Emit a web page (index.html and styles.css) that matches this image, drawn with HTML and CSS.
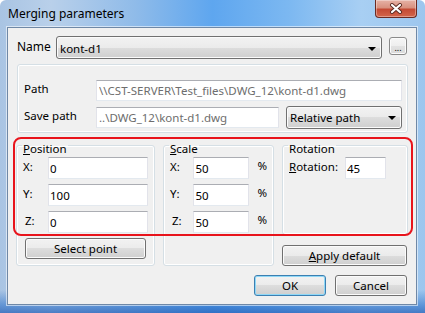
FILE: index.html
```html
<!DOCTYPE html>
<html lang="en">
<head>
<meta charset="utf-8">
<title>Merging parameters</title>
<link rel="stylesheet" href="styles.css">
</head>
<body>

<div class="window">
  <div class="titlebar">
    <span class="title">Merging parameters</span>
    <button class="close-btn" aria-label="Close">
      <svg width="14" height="11" viewBox="0 0 14 11">
        <path d="M3 2 L11 9 M11 2 L3 9" stroke="#5a2a22" stroke-width="4" stroke-linecap="round"/>
        <path d="M3 2 L11 9 M11 2 L3 9" stroke="#ffffff" stroke-width="2.2" stroke-linecap="round"/>
      </svg>
    </button>
  </div>

  <div class="client">
    <div class="name-row">
      <span class="name-label">Name</span>
      <div class="combo name-combo">
        <span>kont-d1</span>
        <span class="arrow"></span>
      </div>
      <button class="btn dots-btn">...</button>
    </div>

    <div class="path-group">
      <div class="path-row">
        <span class="path-label">Path</span>
        <input class="field disabled path-field" value="\\CST-SERVER\Test_files\DWG_12\kont-d1.dwg" readonly>
      </div>
      <div class="path-row">
        <span class="path-label">Save path</span>
        <input class="field disabled save-field" value="..\DWG_12\kont-d1.dwg" readonly>
        <div class="combo rel-combo">
          <span>Relative path</span>
          <span class="arrow"></span>
        </div>
      </div>
    </div>

    <div class="params">
      <fieldset class="box pos-box">
        <legend><u>P</u>osition</legend>
        <div class="coord-row"><span class="coord-label">X:</span><input class="field pos-field" value="0"></div>
        <div class="coord-row"><span class="coord-label">Y:</span><input class="field pos-field" value="100"></div>
        <div class="coord-row"><span class="coord-label z">Z:</span><input class="field pos-field" value="0"></div>
        <button class="btn select-btn">Select point</button>
      </fieldset>

      <fieldset class="box scale-box">
        <legend><u>S</u>cale</legend>
        <div class="coord-row"><span class="coord-label">X:</span><input class="field scale-field" value="50"><span class="pct">%</span></div>
        <div class="coord-row"><span class="coord-label">Y:</span><input class="field scale-field" value="50"><span class="pct">%</span></div>
        <div class="coord-row"><span class="coord-label z">Z:</span><input class="field scale-field" value="50"><span class="pct">%</span></div>
      </fieldset>

      <div class="rot-col">
        <fieldset class="box rot-box">
          <legend>Rotation</legend>
          <div class="coord-row"><span class="rot-label"><u>R</u>otation:</span><input class="field rot-field" value="45"></div>
        </fieldset>
        <button class="btn apply-btn"><u>A</u>pply default</button>
      </div>
    </div>

    <div class="dialog-buttons">
      <button class="btn default-btn">OK</button>
      <button class="btn">Cancel</button>
    </div>

    <div class="highlight"></div>
  </div>
</div>

</body>
</html>
```

FILE: styles.css
```css
* {
  box-sizing: border-box;
}

body {
  margin: 0;
  padding: 0;
  background-color: #ffffff;
  font-family: "Noto Sans", "Open Sans", sans-serif;
  font-size: 11.5px;
  color: #000000;
}

.window {
  width: 425px;
  height: 313px;
  padding: 0 8px 8px 7px;
  display: flex;
  flex-direction: column;
  border-radius: 6px 6px 0 0;
  background:
    linear-gradient(180deg, rgba(255,255,255,0) 0px, rgba(255,255,255,0) 290px, rgba(40,110,200,0.55) 305px, rgba(30,90,180,0.7) 313px),
    linear-gradient(90deg, #a9c4e3 0%, #b9d0ea 12%, #8fbbe9 32%, #5ea6ef 50%, #7cb8f1 68%, #a8cff3 85%, #9dc6ee 100%);
}

/* title bar */
.titlebar {
  height: 27px;
  display: flex;
  justify-content: space-between;
  align-items: flex-start;
  padding-left: 1px;
}

.title {
  padding-top: 6px;
  line-height: 15px;
  font-size: 12px;
  color: #000000;
}

.close-btn {
  width: 42px;
  height: 18px;
  margin: 0;
  padding: 0;
  display: flex;
  align-items: center;
  justify-content: center;
  border: 1px solid #6b2a22;
  border-top: none;
  border-radius: 0 0 4px 4px;
  background: linear-gradient(180deg, #e6b2a6 0%, #d8917f 45%, #c44a34 55%, #d3654b 100%);
  box-shadow: inset 0 0 0 1px rgba(255,255,255,0.35);
}

/* client area */
.client {
  position: relative;
  flex: 1;
  background-color: #f0f0f0;
  border: 1px solid #6f88a6;
  box-shadow: 0 0 0 1px rgba(255,255,255,0.55);
  padding: 8px 8px 0 9px;
}

.name-row {
  display: flex;
  align-items: flex-start;
  height: 23px;
}

.name-label {
  width: 39px;
  padding-top: 3px;
  line-height: 15px;
  font-size: 12px;
}

.combo {
  height: 23px;
  display: flex;
  align-items: center;
  justify-content: space-between;
  padding: 0 5px 0 3px;
  border: 1px solid #707070;
  border-radius: 3px;
  background: linear-gradient(180deg, #f2f2f2 0%, #ebebeb 50%, #dddddd 50%, #cfcfcf 100%);
  box-shadow: inset 0 0 0 1px #fbfbfb;
}

.name-combo {
  flex: 1;
  padding-top: 2px;
}

.arrow {
  width: 0;
  height: 0;
  border-left: 4px solid transparent;
  border-right: 4px solid transparent;
  border-top: 4px solid #000000;
}

.btn {
  height: 21px;
  margin: 0;
  padding: 0;
  font-family: inherit;
  font-size: 11.5px;
  color: #000000;
  border: 1px solid #707070;
  border-radius: 3px;
  background: linear-gradient(180deg, #f2f2f2 0%, #ebebeb 50%, #dddddd 50%, #cfcfcf 100%);
  box-shadow: inset 0 0 0 1px #fbfbfb;
}

.dots-btn {
  width: 18px;
  height: 18px;
  margin: 1px 1px 0 7px;
  font-size: 9px;
  line-height: 10px;
  padding-top: 4px;
  border-color: #8a8a8a;
  background: linear-gradient(180deg, #f6f6f6 0%, #eeeeee 50%, #e2e2e2 50%, #dadada 100%);
}

/* path group */
.path-group {
  margin: 5px 0 0 0;
  height: 69px;
  border: 1px solid #d5dfe5;
  border-radius: 3px;
  box-shadow: inset 0 0 0 1px #ffffff;
  padding: 14px 5px 0 6px;
  display: flex;
  flex-direction: column;
  gap: 4px;
}

.path-row {
  display: flex;
  align-items: center;
  height: 23px;
}

.path-label {
  width: 72px;
  padding-bottom: 4px;
}

.field {
  height: 21px;
  margin: 0;
  padding: 0 1px;
  font-family: inherit;
  font-size: 11.5px;
  color: #000000;
  background-color: #ffffff;
  border: 1px solid #e2e3ea;
  border-top-color: #abadb3;
  border-bottom-color: #e3e9ef;
  outline: none;
}

.field.disabled {
  color: #6d6d6d;
  padding-left: 2px;
}

.path-field {
  flex: 1;
}

.save-field {
  width: 183px;
  margin-right: 7px;
}

.rel-combo {
  flex: 1;
  padding-right: 5px;
}

/* parameter groups */
.params {
  margin: 2px 0 0 -1px;
  display: grid;
  grid-template-columns: 139px 111px 126px;
  column-gap: 8px;
  height: 131px;
}

.box {
  margin: 0;
  padding: 1px 6px 6px 6px;
  min-width: 0;
  border: 1px solid #d5dfe5;
  border-radius: 3px;
  box-shadow: inset 0 0 0 1px #ffffff;
  display: flex;
  flex-direction: column;
  gap: 5px;
}

.box legend {
  padding: 6px 1px 0 1px;
  margin-left: -1px;
  line-height: 15px;
}

.coord-row {
  display: flex;
  align-items: flex-start;
  height: 22px;
}

.coord-label {
  width: 25px;
  padding-top: 2px;
  line-height: 15px;
}

.coord-label.z {
  padding-left: 2px;
}

.pos-field {
  width: 100px;
  height: 22px;
}

.scale-field {
  width: 56px;
  height: 22px;
  margin-right: 8px;
}

.pct {
  padding-top: 1px;
  line-height: 15px;
}

.select-btn {
  margin: auto 2px 0 2px;
}

.rot-col {
  display: flex;
  flex-direction: column;
  justify-content: space-between;
}

.rot-box {
  height: 100px;
}

.rot-label {
  width: 56px;
  padding-top: 2px;
  line-height: 15px;
}

.rot-field {
  width: 41px;
  height: 22px;
}

.apply-btn {
  width: 125px;
}

/* OK / Cancel */
.dialog-buttons {
  margin-top: 9px;
  display: flex;
  justify-content: flex-end;
  gap: 9px;
  padding-right: 1px;
}

.dialog-buttons .btn {
  width: 72px;
}

.default-btn {
  border-color: #3c7fb1;
  box-shadow: inset 0 0 0 1px #8fd8f7;
}

/* red annotation frame */
.highlight {
  position: absolute;
  left: 5px;
  top: 109px;
  width: 400px;
  height: 99px;
  border: 2px solid #e8141c;
  border-radius: 8px;
  pointer-events: none;
}
```
